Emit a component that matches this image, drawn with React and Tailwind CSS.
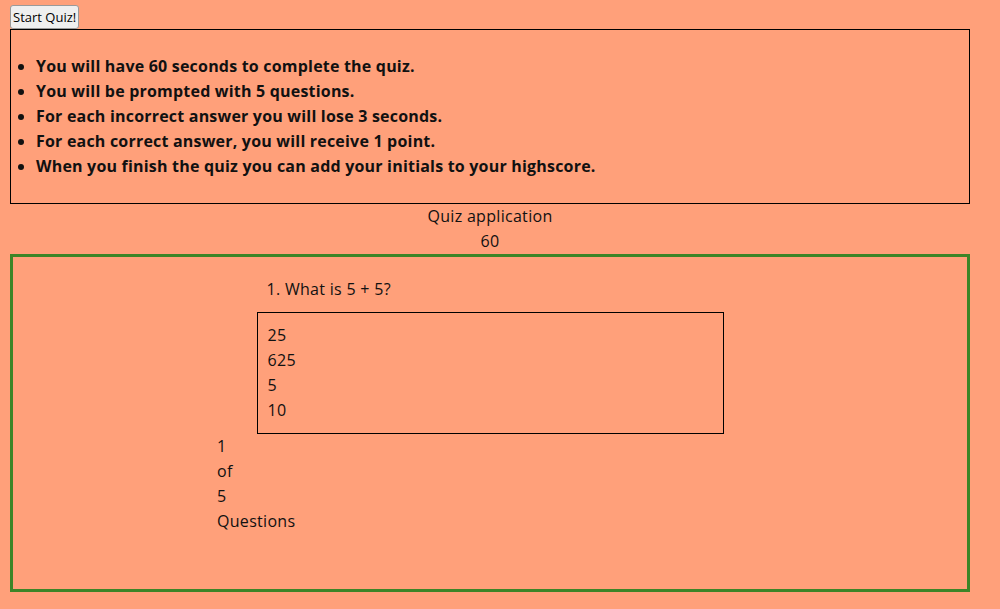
import React from 'react';

const rules = [
  'You will have 60 seconds to complete the quiz.',
  'You will be prompted with 5 questions.',
  'For each incorrect answer you will lose 3 seconds.',
  'For each correct answer, you will receive 1 point.',
  'When you finish the quiz you can add your initials to your highscore.',
];

const answers = ['25', '625', '5', '10'];

export default function App() {
  return (
    <div className="min-h-screen bg-[#ffa07a] pt-[5px] px-[10px] pr-[30px] font-['Open_Sans',sans-serif] text-base leading-[25px] tracking-[0.3px] text-[#111]">
      <button className="block h-[24px] px-[2px] rounded-[3px] border border-[#9a9a9a] bg-[#efefef] text-[13px] leading-[20px] tracking-normal text-black">
        Start Quiz!
      </button>

      {/* instructions */}
      <div className="border border-black py-6">
        <ul className="list-disc pl-[25px] font-bold tracking-[0.2px]">
          {rules.map((r) => (
            <li key={r}>{r}</li>
          ))}
        </ul>
      </div>

      <div className="text-center">
        <p>Quiz application</p>
        <p>60</p>
      </div>

      {/* question card */}
      <div className="h-[338px] border-[3px] border-[#3c8527] pt-[20px]">
        <div className="w-[467px] mx-auto">
          <p className="pl-[10px]">1. What is 5 + 5?</p>
          <div className="mt-[10px] h-[122px] border border-black pt-[10px] pl-[10px]">
            {answers.map((a) => (
              <p key={a}>{a}</p>
            ))}
          </div>
        </div>
        <div className="ml-[204px]">
          <p>1</p>
          <p>of</p>
          <p>5</p>
          <p>Questions</p>
        </div>
      </div>
    </div>
  );
}
